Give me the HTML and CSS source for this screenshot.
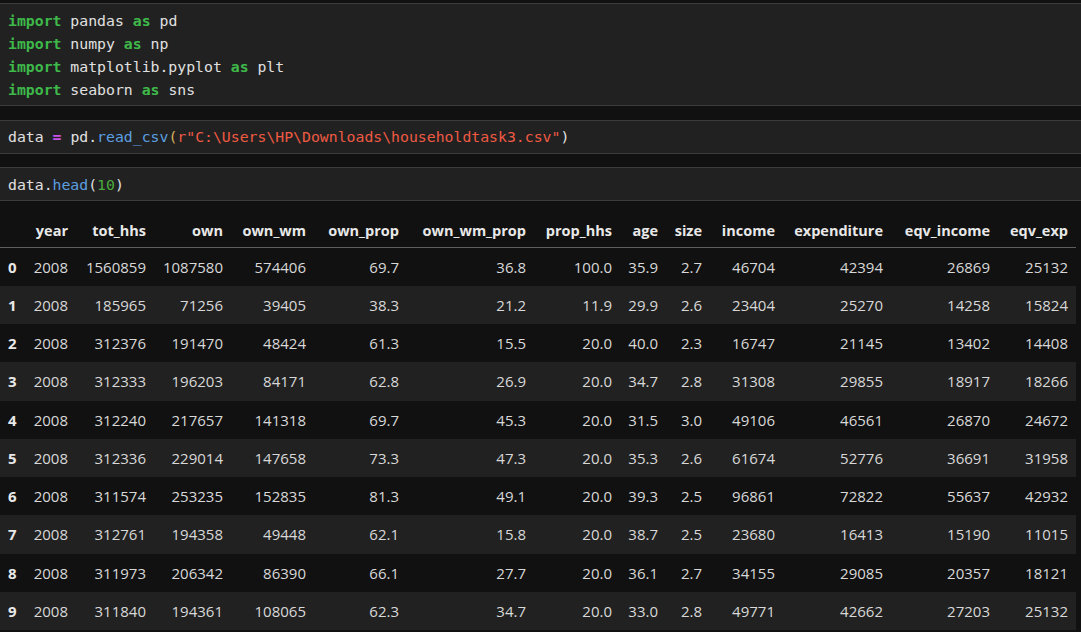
FILE: index.html
```html
<!DOCTYPE html>
<html>
<head>
<meta charset="utf-8">
<link rel="stylesheet" href="styles.css">
</head>
<body>
<div class="nb">
  <div class="cell first">
<pre class="code"><span class="kw">import</span> pandas <span class="kw">as</span> pd
<span class="kw">import</span> numpy <span class="kw">as</span> np
<span class="kw">import</span> matplotlib.pyplot <span class="kw">as</span> plt
<span class="kw">import</span> seaborn <span class="kw">as</span> sns</pre>
  </div>
  <div class="cell">
<pre class="code">data <span class="op">=</span> pd.<span class="fn">read_csv</span><span class="br">(</span><span class="str">r"C:\Users\HP\Downloads\householdtask3.csv"</span>)</pre>
  </div>
  <div class="cell">
<pre class="code">data.<span class="fn">head</span>(<span class="num">10</span>)</pre>
  </div>
  <table class="df">
    <colgroup>
      <col class="c-idx"><col class="c-year"><col class="c-tot"><col class="c-own"><col class="c-ownwm"><col class="c-ownprop"><col class="c-ownwmprop"><col class="c-prophhs"><col class="c-age"><col class="c-size"><col class="c-income"><col class="c-exp"><col class="c-eqvinc"><col class="c-eqvexp">
    </colgroup>
    <thead>
      <tr><th></th><th>year</th><th>tot_hhs</th><th>own</th><th>own_wm</th><th>own_prop</th><th>own_wm_prop</th><th>prop_hhs</th><th>age</th><th>size</th><th>income</th><th>expenditure</th><th>eqv_income</th><th>eqv_exp</th></tr>
    </thead>
    <tbody>
      <tr><th>0</th><td>2008</td><td>1560859</td><td>1087580</td><td>574406</td><td>69.7</td><td>36.8</td><td>100.0</td><td>35.9</td><td>2.7</td><td>46704</td><td>42394</td><td>26869</td><td>25132</td></tr>
      <tr><th>1</th><td>2008</td><td>185965</td><td>71256</td><td>39405</td><td>38.3</td><td>21.2</td><td>11.9</td><td>29.9</td><td>2.6</td><td>23404</td><td>25270</td><td>14258</td><td>15824</td></tr>
      <tr><th>2</th><td>2008</td><td>312376</td><td>191470</td><td>48424</td><td>61.3</td><td>15.5</td><td>20.0</td><td>40.0</td><td>2.3</td><td>16747</td><td>21145</td><td>13402</td><td>14408</td></tr>
      <tr><th>3</th><td>2008</td><td>312333</td><td>196203</td><td>84171</td><td>62.8</td><td>26.9</td><td>20.0</td><td>34.7</td><td>2.8</td><td>31308</td><td>29855</td><td>18917</td><td>18266</td></tr>
      <tr><th>4</th><td>2008</td><td>312240</td><td>217657</td><td>141318</td><td>69.7</td><td>45.3</td><td>20.0</td><td>31.5</td><td>3.0</td><td>49106</td><td>46561</td><td>26870</td><td>24672</td></tr>
      <tr><th>5</th><td>2008</td><td>312336</td><td>229014</td><td>147658</td><td>73.3</td><td>47.3</td><td>20.0</td><td>35.3</td><td>2.6</td><td>61674</td><td>52776</td><td>36691</td><td>31958</td></tr>
      <tr><th>6</th><td>2008</td><td>311574</td><td>253235</td><td>152835</td><td>81.3</td><td>49.1</td><td>20.0</td><td>39.3</td><td>2.5</td><td>96861</td><td>72822</td><td>55637</td><td>42932</td></tr>
      <tr><th>7</th><td>2008</td><td>312761</td><td>194358</td><td>49448</td><td>62.1</td><td>15.8</td><td>20.0</td><td>38.7</td><td>2.5</td><td>23680</td><td>16413</td><td>15190</td><td>11015</td></tr>
      <tr><th>8</th><td>2008</td><td>311973</td><td>206342</td><td>86390</td><td>66.1</td><td>27.7</td><td>20.0</td><td>36.1</td><td>2.7</td><td>34155</td><td>29085</td><td>20357</td><td>18121</td></tr>
      <tr><th>9</th><td>2008</td><td>311840</td><td>194361</td><td>108065</td><td>62.3</td><td>34.7</td><td>20.0</td><td>33.0</td><td>2.8</td><td>49771</td><td>42662</td><td>27203</td><td>25132</td></tr>
    </tbody>
  </table>
</div>
</body>
</html>
```
FILE: styles.css
```css
html, body {
  margin: 0;
  padding: 0;
  background: #111111;
}
.nb {
  padding-top: 3px;
  display: flex;
  flex-direction: column;
  gap: 13.5px;
}
.cell {
  background: #212121;
  border-top: 1px solid #3c3c3c;
  border-bottom: 1px solid #3c3c3c;
  padding: 4.5px 8px;
}
.code {
  margin: 0;
  font-family: "DejaVu Sans Mono", "Liberation Mono", monospace;
  font-size: 14.8px;
  line-height: 23px;
  color: #e0e0e0;
  white-space: pre;
}
.kw { color: #3eb94a; font-weight: bold; }
.op { color: #c852e6; font-weight: bold; }
.fn { color: #5c9fe0; }
.str { color: #ef5a43; }
.num { color: #4aac3e; }
.br { color: #dcb35c; }

.df {
  border-collapse: collapse;
  table-layout: fixed;
  width: 1076px;
  margin-top: -13.5px;
  font-family: "Open Sans", "Noto Sans", sans-serif;
  font-size: 15px;
  color: #d8d8d8;
}
.c-idx { width: 28px; }
.c-year { width: 48px; }
.c-tot { width: 78px; }
.c-own { width: 77px; }
.c-ownwm { width: 83px; }
.c-ownprop { width: 93px; }
.c-ownwmprop { width: 127px; }
.c-prophhs { width: 86px; }
.c-age { width: 46px; }
.c-size { width: 44px; }
.c-income { width: 73px; }
.c-exp { width: 108px; }
.c-eqvinc { width: 107px; }
.c-eqvexp { width: 78px; }

.df thead th {
  height: 46px;
  box-sizing: border-box;
  vertical-align: bottom;
  padding: 0 8px 7px 0;
  text-align: right;
  font-weight: bold;
  font-size: 14.5px;
  color: #e8e8e8;
  border-bottom: 1px solid #5e5e5e;
  white-space: nowrap;
}
.df td, .df tbody th {
  padding-top: 9px;
  padding-bottom: 9px;
  line-height: 20.25px;
}
.df tbody tr:nth-child(even) { background: #212121; }
.df td {
  text-align: right;
  padding-right: 8px;
  padding-left: 0;
  vertical-align: middle;
  white-space: nowrap;
}
.df tbody th {
  text-align: left;
  padding-left: 8px;
  padding-right: 0;
  font-weight: bold;
  color: #e8e8e8;
}
```
